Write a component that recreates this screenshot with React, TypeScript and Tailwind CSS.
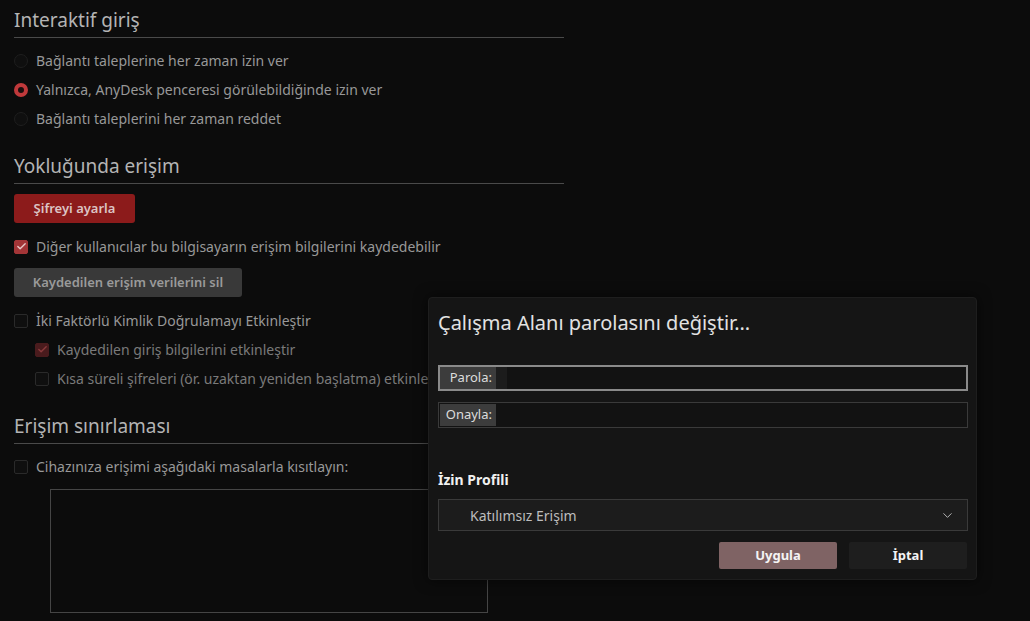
import { Check, ChevronDown } from 'lucide-react';

const font = { fontFamily: '"Noto Sans", "Open Sans", sans-serif' };

function SectionTitle({ title, className = '' }: { title: string; className?: string }) {
  return (
    <div className={`border-b border-[#4a4a4a] pb-1 ${className}`}>
      <h2 className="text-[19px] leading-[26px] text-[#b4b4b4]">{title}</h2>
    </div>
  );
}

function Radio({ label, checked }: { label: string; checked?: boolean }) {
  return (
    <div className="flex h-[29px] items-center gap-2">
      {checked ? (
        <span className="h-[14px] w-[14px] rounded-full border-[4px] border-[#c0393b] bg-[#1a0e0e]" />
      ) : (
        <span className="h-[14px] w-[14px] rounded-full border border-[#1e1e1e] bg-[#0f0f0f]" />
      )}
      <span className="text-[14px] text-[#989898]">{label}</span>
    </div>
  );
}

function CheckRow({
  label,
  checked,
  dim,
  indent,
}: {
  label: string;
  checked?: boolean;
  dim?: boolean;
  indent?: boolean;
}) {
  const box = checked
    ? dim
      ? 'bg-[#4a1b1d] border-[#4a1b1d] text-[#8a3a3c]'
      : 'bg-[#a33537] border-[#a33537] text-[#e8c8c8]'
    : 'border-[#2a2a2a] bg-[#0f0f0f]';
  return (
    <div className={`flex h-[29px] items-center gap-2 ${indent ? 'pl-[21px]' : ''}`}>
      <span className={`flex h-[14px] w-[14px] items-center justify-center rounded-[2px] border ${box}`}>
        {checked && <Check size={11} strokeWidth={3} />}
      </span>
      <span className={`whitespace-nowrap text-[14px] ${dim ? 'text-[#7a7a7a]' : 'text-[#989898]'}`}>{label}</span>
    </div>
  );
}

function Field({ label, focused }: { label: string; focused?: boolean }) {
  return (
    <div
      className={`flex h-[26px] items-stretch bg-[#121212] ${
        focused ? 'border-2 border-[#8a8a8a] p-0' : 'border border-[#3a3a3a] p-px'
      }`}
    >
      <span className="flex w-[56px] items-center justify-end bg-[#3c3c3c] pr-[4px] text-[13px] text-[#dcdcdc]">
        {label}
      </span>
      {focused && <span className="w-[11px] bg-[#1c1c1c]" />}
    </div>
  );
}

export default function App() {
  return (
    <div className="relative h-[621px] w-[1030px] overflow-hidden bg-[#0c0c0c]" style={font}>
      <div className="w-[564px] pl-[14px] pt-[7px]">
        <SectionTitle title="Interaktif giriş" />
        <div className="mt-[8px]">
          <Radio label="Bağlantı taleplerine her zaman izin ver" />
          <Radio label="Yalnızca, AnyDesk penceresi görülebildiğinde izin ver" checked />
          <Radio label="Bağlantı taleplerini her zaman reddet" />
        </div>

        <SectionTitle title="Yokluğunda erişim" className="mt-[20px]" />
        <button className="mt-[10px] flex h-[29px] w-[121px] items-center justify-center rounded-[3px] bg-[#8c1b1b] pt-px text-[13px] font-semibold text-[#dcc4c4]">
          Şifreyi ayarla
        </button>
        <div className="mt-[9px]">
          <CheckRow label="Diğer kullanıcılar bu bilgisayarın erişim bilgilerini kaydedebilir" checked />
        </div>
        <button className="mt-[7px] flex h-[29px] w-[228px] items-center justify-center rounded-[3px] bg-[#393939] pt-px text-[13px] font-semibold text-[#9a9a9a]">
          Kaydedilen erişim verilerini sil
        </button>
        <div className="mt-[9px]">
          <CheckRow label="İki Faktörlü Kimlik Doğrulamayı Etkinleştir" />
          <CheckRow label="Kaydedilen giriş bilgilerini etkinleştir" checked dim indent />
          <CheckRow label="Kısa süreli şifreleri (ör. uzaktan yeniden başlatma) etkinleştir" dim indent />
        </div>

        <SectionTitle title="Erişim sınırlaması" className="mt-[20px]" />
        <div className="mt-[8px]">
          <CheckRow label="Cihazınıza erişimi aşağıdaki masalarla kısıtlayın:" />
        </div>
        <div className="ml-[36px] mt-[8px] h-[124px] w-[438px] border border-[#454545]" />
      </div>

      <div className="absolute left-[428px] top-[297px] flex h-[283px] w-[549px] flex-col rounded-[4px] border border-[#1e1e1e] bg-[#151515] pl-[9px] pr-[8px] shadow-[0_0_14px_rgba(0,0,0,0.6)]">
        <h1 className="mt-[12px] text-[20px] leading-[26px] text-[#e2e2e2]">Çalışma Alanı parolasını değiştir...</h1>
        <div className="mt-[29px] flex flex-col gap-[11px]">
          <Field label="Parola:" focused />
          <Field label="Onayla:" />
        </div>
        <div className="mt-[42px] text-[14px] font-bold leading-[20px] text-[#f0f0f0]">İzin Profili</div>
        <div className="mt-[9px] flex h-[32px] items-center justify-between border border-[#3a3a3a] bg-[#1c1c1c] pl-[31px] pr-[12px]">
          <span className="text-[14px] text-[#bdbdbd]">Katılımsız Erişim</span>
          <ChevronDown size={15} strokeWidth={1.5} className="text-[#bdbdbd]" />
        </div>
        <div className="mt-[11px] flex justify-end gap-[12px] pr-px">
          <button className="h-[27px] w-[118px] rounded-[2px] bg-[#7f6364] text-[13px] font-bold text-[#f4f4f4]">Uygula</button>
          <button className="h-[27px] w-[118px] rounded-[2px] bg-[#1e1e1e] text-[13px] font-bold text-[#f4f4f4]">İptal</button>
        </div>
      </div>
    </div>
  );
}
